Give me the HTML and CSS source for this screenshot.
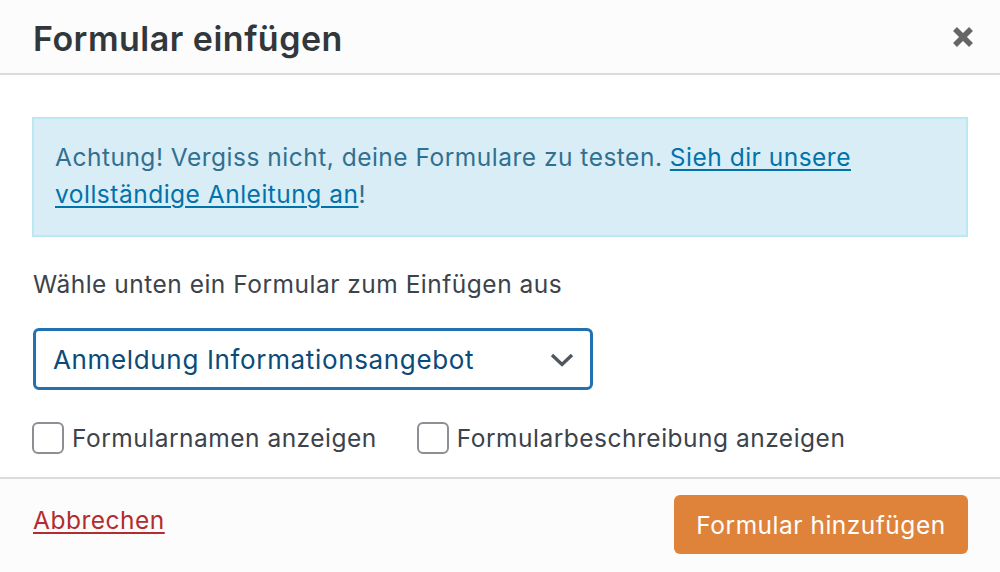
FILE: index.html
```html
<!DOCTYPE html>
<html lang="de">
<head>
<meta charset="utf-8">
<title>Formular einfügen</title>
<link rel="stylesheet" href="styles.css">
</head>
<body>
<div class="modal">
  <header class="modal-header">
    <h1 class="modal-title">Formular einfügen</h1>
    <button class="close" aria-label="Schließen">
      <svg viewBox="0 0 24 24" width="24" height="24"><path d="M4 4 L20 20 M20 4 L4 20" stroke="#666" stroke-width="5.5" stroke-linecap="butt" fill="none"/></svg>
    </button>
  </header>
  <main class="modal-body">
    <div class="notice">Achtung! Vergiss nicht, deine Formulare zu testen. <a href="#">Sieh dir unsere</a> <a href="#">vollständige Anleitung an</a>!</div>
    <p class="label">Wähle unten ein Formular zum Einfügen aus</p>
    <div class="select">
      <span>Anmeldung Informationsangebot</span>
      <svg viewBox="0 0 24 14" width="24" height="14"><path d="M2 2 L12 11.5 L22 2" stroke="#50575e" stroke-width="3.4" fill="none"/></svg>
    </div>
    <div class="options">
      <label class="opt"><input type="checkbox"><span>Formularnamen anzeigen</span></label>
      <label class="opt"><input type="checkbox"><span>Formularbeschreibung anzeigen</span></label>
    </div>
  </main>
  <footer class="modal-footer">
    <a href="#" class="cancel">Abbrechen</a>
    <button class="submit">Formular hinzufügen</button>
  </footer>
</div>
</body>
</html>
```
FILE: styles.css
```css
* { box-sizing: border-box; }
html, body { margin: 0; padding: 0; }
body {
  background: #fff;
  font-family: Inter, "Noto Sans", sans-serif;
  color: #3c434a;
  width: 1000px;
  height: 572px;
  overflow: hidden;
}
.modal { display: flex; flex-direction: column; height: 572px; }
.modal-header {
  height: 75px;
  background: #fcfcfc;
  border-bottom: 2px solid #dcdcde;
  display: flex;
  align-items: center;
  justify-content: space-between;
  padding: 0 25px 0 33px;
}
.modal-title {
  margin: 0;
  font-size: 34px;
  font-weight: 600;
  color: #32373c;
  letter-spacing: 0.5px;
  line-height: 1;
  padding-top: 4px;
}
.close {
  border: 0;
  background: none;
  padding: 0;
  width: 24px;
  height: 24px;
  display: flex;
  cursor: pointer;
}
.modal-body { padding: 42px 32px 23px; }
.notice {
  background: #d9edf7;
  border: 2px solid #bce8f1;
  color: #31708f;
  font-size: 24.5px;
  letter-spacing: 0.5px;
  line-height: 37px;
  padding: 20px 21px 22px;
}
.notice a { color: #0073aa; text-decoration: underline; text-underline-offset: 3px; text-decoration-thickness: 2px; }
.label {
  margin: 29px 0 0 1px;
  font-size: 24.5px;
  letter-spacing: 0.5px;
  line-height: 37px;
  color: #3c434a;
}
.select {
  margin: 25px 0 0 1px;
  width: 560px;
  height: 62px;
  border: 3px solid #2271b1;
  border-radius: 6px;
  display: flex;
  align-items: center;
  justify-content: space-between;
  padding: 0 16px 0 17px;
  font-size: 26px;
  letter-spacing: 0.65px;
  color: #0a4b78;
}
.select svg { margin-top: 2px; }
.options {
  margin-top: 32px;
  display: flex;
  gap: 40px;
}
.opt {
  display: flex;
  align-items: center;
  gap: 8px;
  font-size: 24.5px;
  letter-spacing: 0.5px;
  color: #3c434a;
}
.opt input {
  appearance: none;
  -webkit-appearance: none;
  margin: 0;
  width: 32px;
  height: 32px;
  border: 2px solid #8c8f94;
  border-radius: 6px;
  background: #fff;
}
.modal-footer {
  flex: 1;
  background: #fcfcfc;
  border-top: 2px solid #dcdcde;
  display: flex;
  align-items: flex-start;
  justify-content: space-between;
  padding: 16px 32px 0 33px;
}
.cancel {
  color: #b32d2e;
  font-size: 24.5px;
  letter-spacing: 0.5px;
  line-height: 59px;
  margin-top: -4px;
  text-decoration: underline;
  text-underline-offset: 3px;
  text-decoration-thickness: 2px;
}
.submit {
  background: #df833b;
  border: 0;
  border-radius: 6px;
  color: #fff;
  font-family: inherit;
  font-size: 24.5px;
  letter-spacing: 0.5px;
  height: 59px;
  width: 294px;
  padding: 0;
}
```
